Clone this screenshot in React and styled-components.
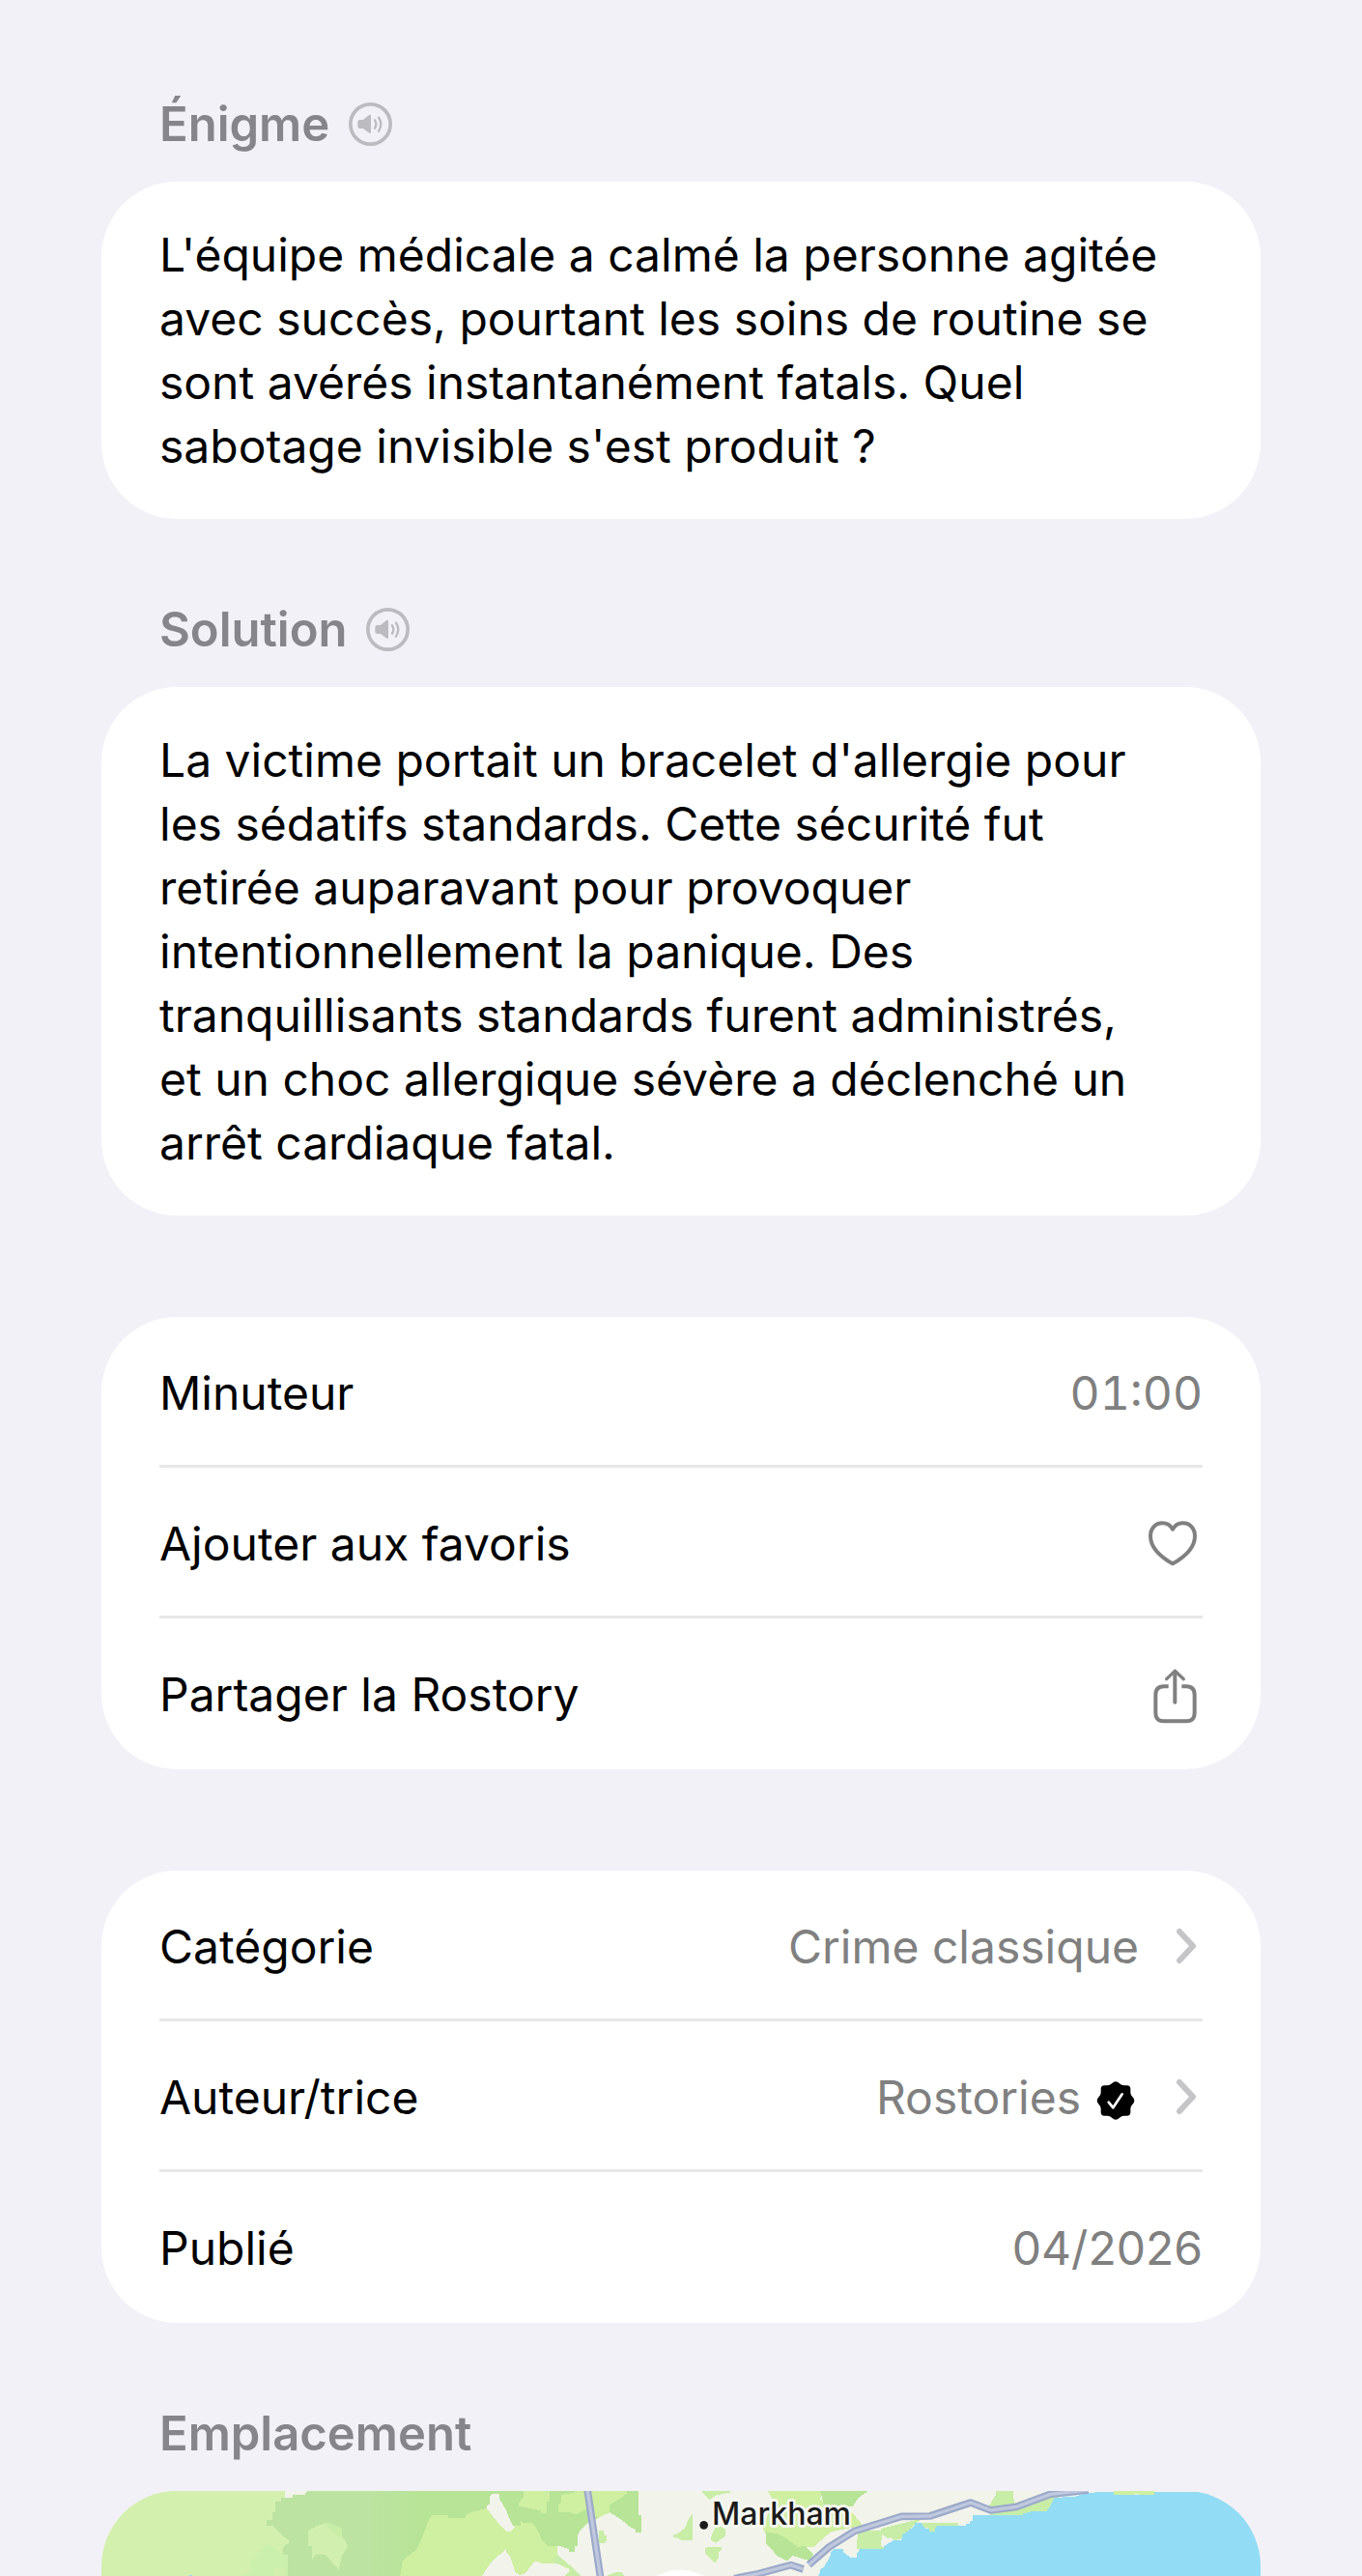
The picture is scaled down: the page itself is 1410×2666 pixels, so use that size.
import React from "react";
import styled, { createGlobalStyle } from "styled-components";

const GlobalStyle = createGlobalStyle`
  *, *::before, *::after { box-sizing: border-box; }
  body {
    margin: 0;
    background: #f2f1f7;
    color: #000;
    font-family: Inter, "Liberation Sans", sans-serif;
    font-size: 48px;
    line-height: 66px;
  }
`;

const Page = styled.main`
  display: flex;
  flex-direction: column;
  min-height: 100vh;
  padding: 94px 105px 0;
`;

const Section = styled.section`
  display: flex;
  flex-direction: column;
  flex: ${({ $fill }) => ($fill ? "1 0 auto" : "none")};
  margin-top: ${({ $gap }) => $gap || 0}px;
`;

const Heading = styled.div`
  display: flex;
  align-items: center;
  gap: 20px;
  padding: 0 60px 26px;
`;

const Title = styled.h2`
  margin: 0;
  padding-top: 2px;
  color: #86858b;
  font-size: 49px;
  font-weight: 600;
`;

const IconButton = styled.button`
  display: flex;
  padding: 0;
  border: 0;
  background: none;
  color: #bcbbc0;
`;

const TextCard = styled.p`
  margin: 0;
  padding: 43px 100px 42px 60px;
  border-radius: 78px;
  background: #fff;
`;

const ListCard = styled.ul`
  margin: 0;
  padding: 0 60px;
  border-radius: 78px;
  background: #fff;
  list-style: none;
`;

const ListItem = styled.li`
  display: flex;
  height: 156px;
  padding-top: 3px;
  border-bottom: 3px solid ${({ $last }) => ($last ? "transparent" : "#e7e7e7")};
`;

const Row = styled.div`
  display: flex;
  flex: 1;
  align-items: center;
  justify-content: space-between;
  padding: 0;
  border: 0;
  background: none;
  color: inherit;
  font: inherit;
  text-align: left;
  text-decoration: none;
`;

const Label = styled.span`
  padding-top: 2px;
`;

const Value = styled.span`
  display: flex;
  align-items: center;
  gap: 16px;
  padding-top: 2px;
  color: #808080;
  font-variant-numeric: ${({ $tabular }) => ($tabular ? "tabular-nums" : "normal")};
`;

const Trailing = styled.span`
  display: flex;
  align-items: center;
  gap: ${({ $gap }) => $gap}px;
  padding-right: 6px;
  color: #808080;
`;

const MapCard = styled.div`
  display: flex;
  flex: 1 0 88px;
  height: 88px;
  overflow: hidden;
  border-radius: 78px 78px 0 0;
  background: #f2f3ea;
`;

const MapDrawing = styled.svg`
  display: block;
  width: 100%;
  height: 100%;
  font-family: Inter, "Liberation Sans", sans-serif;
`;

function SpeakerIcon() {
  return (
    <svg width="45" height="45" viewBox="0 0 135 135" fill="none" stroke="currentColor" aria-hidden="true">
      <circle cx="67.500" cy="67.500" r="62" strokeWidth="11" />
      <path d="M28 61q0-7 7-7h10l17-14q7-5 7 2v50q0 7-7 2l-17-13h-10q-7 0-7-7z" fill="currentColor" stroke="none" />
      <path d="M81 55q8 12 0 25M93 47q14 20 0 42" strokeWidth="7" strokeLinecap="round" />
    </svg>
  );
}

function HeartIcon() {
  return (
    <svg width="50" height="47" viewBox="0 0 150 141" fill="none" stroke="currentColor" strokeWidth="12" strokeLinejoin="round" aria-hidden="true">
      <path d="M75 26C67 12 55 7 43 7C21 7 6 24 6 47C6 79 31 108 75 133C119 108 144 79 144 47C144 24 129 7 107 7C95 7 83 12 75 26Z" />
    </svg>
  );
}

function ShareIcon() {
  return (
    <svg width="45" height="61" viewBox="0 -12 135 183" fill="none" stroke="currentColor" strokeWidth="12" strokeLinecap="round" strokeLinejoin="round" aria-hidden="true">
      <path d="M47 55H33Q7 55 7 81V137Q7 163 33 163H102Q128 163 128 137V81Q128 55 102 55H88" strokeLinecap="butt" />
      <path d="M67 104V9" />
      <path d="M41 32L67 7L94 32" strokeWidth="10" />
    </svg>
  );
}

function ChevronIcon() {
  return (
    <svg width="22" height="38" viewBox="0 0 22 38" fill="none" stroke="#c5c5c7" strokeWidth="6" strokeLinecap="round" strokeLinejoin="round" aria-hidden="true">
      <path d="M4 4L18 19L4 34" />
    </svg>
  );
}

function VerifiedIcon() {
  return (
    <svg width="40" height="48" viewBox="0 -20 120 144" aria-hidden="true">
      <path
        d="M48 8Q60-4 72 8Q78 14 86 14H95Q106 14 106 25V36Q106 43 112 49Q124 61 112 73Q106 79 106 86V97Q106 108 95 108H86Q78 108 72 114Q60 126 48 114Q42 108 34 108H25Q14 108 14 97V86Q14 79 8 73Q-4 61 8 49Q14 43 14 36V25Q14 14 25 14H34Q42 14 48 8Z"
        fill="#000"
      />
      <path d="M38 66L52 83L80 41" fill="none" stroke="#fff" strokeWidth="8" strokeLinecap="round" strokeLinejoin="round" />
    </svg>
  );
}

const ROADS = [
  "M1523 20L1566 310",
  "M1980 305L2055 290L2156 263L2195 276",
  "M2212 262L2275 207L2355 157L2500 112L2588 111L2715 69L2777 93L2857 82L2962 43L3080 30",
];

function CoastMap() {
  return (
    <MapDrawing viewBox="15 33 3600 267" preserveAspectRatio="xMidYMin slice" role="img" aria-label="Carte des environs de Markham">
      <defs>
        <linearGradient id="forest" gradientUnits="userSpaceOnUse" x1="840" y1="0" x2="1010" y2="0">
          <stop offset="0" stopColor="#bce3a1" />
          <stop offset="1" stopColor="#b7e497" />
        </linearGradient>
      </defs>
      <path fill="#f2f3ea" d="M0 0H3700V300H0Z" />
      <g shapeRendering="crispEdges">
        <path fill="#d3f0ae" d="M0 33H584V54H572V66H556V98H546V122H528V140H546L575 168L600 190L580 208V231H594V300H0Z" />
        <path fill="#cbf0ae" d="M532 195L578 230H594V300H440L482 284L475 255Z" />
        <path fill="#d3f0ae" d="M550 268L584 278V300H550Z" />
        <path fill="#92dcf6" d="M288 294H297V303H288Z" />
        <path
          fill="url(#forest)"
          d="M654 33H1683V108H1692V162H1675V153L1657 145L1640 130L1605 106L1594 100L1560 115L1520 136L1503 155L1494 170V204H1485V221H1468V214L1440 204H1400L1353 180H1200L1000 300H594V231H580V208L600 190L575 168L546 140H528V122H546V98H556V66H572V54H609V45H646Z"
        />
        <path fill="#d1efae" d="M657 158L684 141L710 133H726L762 150V170L780 204L762 235L752 276L710 232H680L668 249V204H657Z" />
        <path fill="#c8eda6" d="M710 133H726L762 150V178L735 164Z" />
        <path
          fill="#cfefa1"
          d="M942 300L950 250L996 212L1005 190L1014 168L1032 122L1042 108H1091V117H1146V108L1168 97L1212 87L1230 110L1272 152H1290L1299 140H1317V124L1326 132H1353L1362 142L1375 165L1382 183L1400 203H1431V231L1460 262L1465 275L1430 258H1385L1362 250L1330 290L1315 294L1300 285L1284 235L1272 222V213L1250 232L1220 262L1210 276L1195 300Z"
        />
        <path fill="#f2f3ea" d="M1220 50L1230 42H1252V60L1272 92L1282 120L1290 136L1299 144L1288 158H1274L1245 130L1220 98L1212 90V78L1220 74Z" />
        <path
          fill="#cfefa1"
          d="M1326 33H1406V66H1397V102H1380V94L1310 80V72L1317 60L1326 54ZM1485 33H1646V42L1620 60L1603 70L1594 76V100L1560 115H1550L1520 90L1490 106L1466 98H1434V75L1443 66V45L1485 38Z"
        />
        <path
          fill="#c8eda6"
          d="M1560 155H1574V168L1584 172V186L1575 195H1560ZM1415 250L1430 230L1475 268L1506 300H1452L1470 280L1462 268L1420 256ZM1587 294L1614 286H1632L1640 300H1587ZM1791 168H1800V177H1791Z"
        />
        <path fill="#c8eda6" d="M1882 33H1967V38L1927 46L1902 60L1882 38ZM1800 168L1826 150L1838 122L1850 104V186H1816L1800 176ZM1925 140L1952 150V175L1938 183L1925 195L1908 186V176ZM1900 208H1942V214L1932 225V240L1920 257L1890 226V210Z" />
        <path fill="#cfefa1" d="M2085 33H2250L2248 60L2330 81L2380 140L2280 160L2225 208H2180L2080 170L2070 150L2100 60Z" />
        <path fill="#b7e497" d="M2248 33H2397L2365 55L2348 81H2260ZM2078 160L2115 166L2145 182L2175 206L2200 205L2225 230L2215 250L2162 234L2144 250L2115 235L2078 195Z" />
        <path fill="#c8eda6" d="M2365 157H2438V208L2445 205V213H2362V190ZM2435 150L2555 120H2560L2516 160L2502 168V178L2485 186H2465L2435 165ZM2550 132H2676V142H2612V150L2603 159H2587V150L2558 141ZM2765 90L2775 73L2793 45V33H3020L2990 50L2965 84L2952 97L2908 98V108H2775Z" />
        <path fill="#f2f3ea" d="M2846 33H2960L2850 72ZM2436 186L2465 178L2484 188L2462 212H2446V205H2436Z" />
        <path
          fill="#92dcf6"
          d="M2238 300L2248 285V276L2260 268L2280 232V222L2292 213H2318V222L2330 231L2342 240H2362V226L2371 213H2445V205L2475 186H2498L2502 178V168L2516 160L2542 140V132H2560L2575 150H2587V159H2603V150L2612 141H2700V135H2712V126H2721V108H2878V103L2907 96H2950L2962 80L2975 54L3040 50L3065 42L3110 36H3160V45H3284V35H3620V300Z"
        />
        <path fill="#cfefa1" d="M3159 33H3284V45H3237V41H3222V45H3159Z" />
      </g>
      <g fill="none" strokeLinejoin="bevel">
        {ROADS.map((d) => (
          <path key={d} d={d} stroke="#9ba9ca" strokeWidth="23" />
        ))}
        {ROADS.map((d) => (
          <path key={d} d={d} stroke="#bfc8dd" strokeWidth="10" />
        ))}
      </g>
      <circle cx="1813" cy="427" r="149" fill="#fff" />
      <g fill="#1b1b1b" stroke="#f7f8f2" strokeLinejoin="round" paintOrder="stroke">
        <circle cx="1886" cy="139" r="13" strokeWidth="8" />
        <text x="1911" y="137" fontSize="96" fontWeight="500" strokeWidth="16">Markham</text>
      </g>
    </MapDrawing>
  );
}

function SpokenSection({ title, gap, children }) {
  return (
    <Section $gap={gap}>
      <Heading>
        <Title>{title}</Title>
        <IconButton type="button" aria-label={`Écouter : ${title}`}>
          <SpeakerIcon />
        </IconButton>
      </Heading>
      <TextCard>{children}</TextCard>
    </Section>
  );
}

export default function App() {
  return (
    <>
      <GlobalStyle />
      <Page>
        <SpokenSection title="Énigme">
          L'équipe médicale a calmé la personne agitée avec succès, pourtant les soins de routine se sont avérés
          instantanément fatals. Quel sabotage invisible s'est produit ?
        </SpokenSection>

        <SpokenSection title="Solution" gap={80}>
          La victime portait un bracelet d'allergie pour les sédatifs standards. Cette sécurité fut retirée auparavant
          pour provoquer intentionnellement la panique. Des tranquillisants standards furent administrés, et un choc
          allergique sévère a déclenché un arrêt cardiaque fatal.
        </SpokenSection>

        <Section $gap={105}>
          <ListCard>
            <ListItem>
              <Row>
                <Label>Minuteur</Label>
                <Value $tabular>01:00</Value>
              </Row>
            </ListItem>
            <ListItem>
              <Row as="button" type="button">
                <Label>Ajouter aux favoris</Label>
                <Trailing>
                  <HeartIcon />
                </Trailing>
              </Row>
            </ListItem>
            <ListItem $last>
              <Row as="button" type="button">
                <Label>Partager la Rostory</Label>
                <Trailing>
                  <ShareIcon />
                </Trailing>
              </Row>
            </ListItem>
          </ListCard>
        </Section>

        <Section $gap={105}>
          <ListCard>
            <ListItem>
              <Row as="a" href="#categorie">
                <Label>Catégorie</Label>
                <Trailing $gap={38}>
                  <Value>Crime classique</Value>
                  <ChevronIcon />
                </Trailing>
              </Row>
            </ListItem>
            <ListItem>
              <Row as="a" href="#auteur">
                <Label>Auteur/trice</Label>
                <Trailing $gap={42}>
                  <Value>
                    Rostories
                    <VerifiedIcon />
                  </Value>
                  <ChevronIcon />
                </Trailing>
              </Row>
            </ListItem>
            <ListItem $last>
              <Row>
                <Label>Publié</Label>
                <Value>04/2026</Value>
              </Row>
            </ListItem>
          </ListCard>
        </Section>

        <Section $gap={80} $fill>
          <Heading>
            <Title>Emplacement</Title>
          </Heading>
          <MapCard>
            <CoastMap />
          </MapCard>
        </Section>
      </Page>
    </>
  );
}
